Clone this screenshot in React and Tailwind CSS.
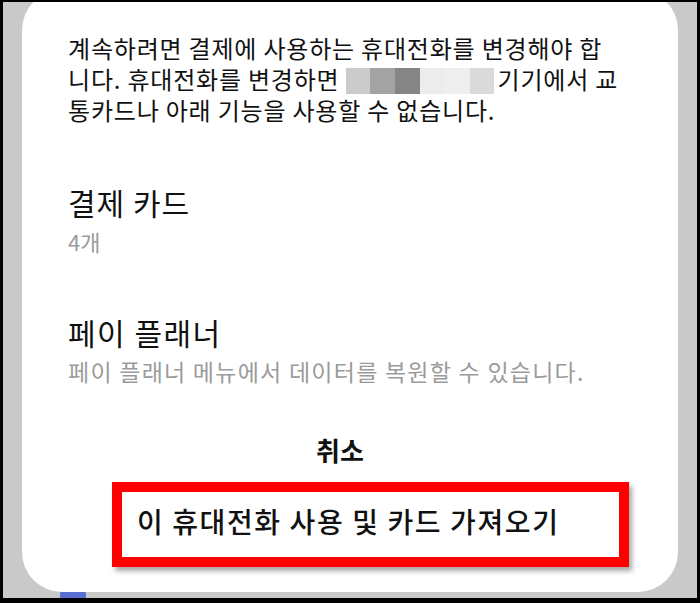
import React from "react";

const Blur = () => {
    const cells = ["bg-[#cbcbcb]", "bg-[#a3a3a3]", "bg-[#858585]", "bg-[#ececec]", "bg-[#efefef]", "bg-[#dadada]"];
    return (
        <span className="inline-flex h-[26px] w-[149px] align-middle -mt-[3px] ml-[6px] mr-[3px]">
            {cells.map((c, i) => (
                <span key={i} className={"h-full flex-1 " + c}></span>
            ))}
        </span>
    );
};

const App = () => {
    return (
        <div className="w-[700px] h-[603px] bg-black pt-[2px] pl-[3px] pr-[3px] pb-[5px] overflow-hidden font-['Noto_Sans_CJK_KR','Noto_Sans',sans-serif]">
            <div className="relative h-full bg-[#c9c9c9] px-[19px] overflow-hidden">
                {/* app icon peeking out under the sheet */}
                <div className="absolute left-[57px] top-[586px] w-[26px] h-[22px] rounded-md bg-[#5a6fd1]"></div>

                <div className="relative z-10 -mt-[12px] h-[602px] rounded-[40px] bg-white pl-[46px] pr-[20px] pt-[42px]">
                    <div className="text-[24px] leading-[31px] text-[#111] tracking-[0.8px]">
                        <div className="whitespace-nowrap">계속하려면 결제에 사용하는 휴대전화를 변경해야 합</div>
                        <div className="whitespace-nowrap">니다. 휴대전화를 변경하면<Blur />기기에서 교</div>
                        <div className="whitespace-nowrap">통카드나 아래 기능을 사용할 수 없습니다.</div>
                    </div>

                    <div className="mt-[59px] text-[30px] leading-[36px] tracking-[1px] text-[#111]">결제 카드</div>
                    <div className="mt-[7px] text-[22px] leading-[28px] text-[#9b9b9b]">4개</div>

                    <div className="mt-[59px] text-[30px] leading-[36px] tracking-[1.5px] text-[#111]">페이 플래너</div>
                    <div className="mt-[6px] text-[23px] leading-[30px] tracking-[1.25px] text-[#9b9b9b] whitespace-nowrap">페이 플래너 메뉴에서 데이터를 복원할 수 있습니다.</div>

                    <div className="-ml-[46px] mt-[47px] text-center text-[26px] leading-[34px] font-semibold text-[#111]">취소</div>

                    <div className="ml-[44px] mt-[15px] w-[517px] h-[85px] border-[10px] border-[#ff0000] shadow-[3px_4px_5px_rgba(0,0,0,0.35)] flex items-center pl-[15px] pb-[8px]">
                        <span className="text-[28px] leading-[34px] tracking-[1.6px] font-medium text-[#111] whitespace-nowrap">이 휴대전화 사용 및 카드 가져오기</span>
                    </div>
                </div>
            </div>
        </div>
    );
};

export default App;
